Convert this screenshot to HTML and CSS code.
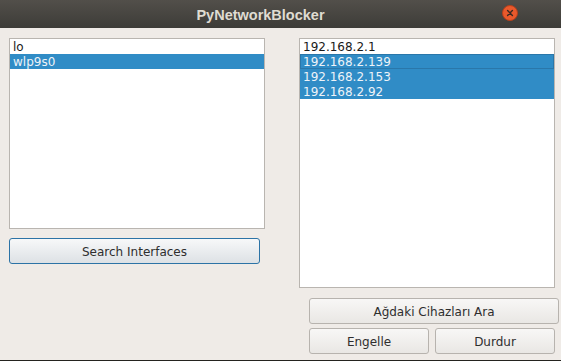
FILE: index.html
```html
<!DOCTYPE html>
<html lang="en">
  <head>
    <meta charset="UTF-8" />
    <title>PyNetworkBlocker</title>
    <link rel="stylesheet" href="styles.css">
  </head>
  <body>
    <div class="window">
      <div class="titlebar">
        <span class="title">PyNetworkBlocker</span>
        <span class="close">
          <svg width="16" height="16" viewBox="0 0 16 16">
            <circle cx="8" cy="8" r="7.5" fill="#e9592c" stroke="#b8401b" stroke-width="1" />
            <path d="M5.6 5.6 L10.4 10.4 M10.4 5.6 L5.6 10.4" stroke="#3a2a22" stroke-width="1.4" stroke-linecap="round" />
          </svg>
        </span>
      </div>

      <div class="content">
        <div class="col left">
          <ul class="list list-ifaces">
            <li>lo</li>
            <li class="selected">wlp9s0</li>
          </ul>
          <button class="btn default">Search Interfaces</button>
        </div>

        <div class="col right">
          <ul class="list list-hosts">
            <li>192.168.2.1</li>
            <li class="selected current">192.168.2.139</li>
            <li class="selected">192.168.2.153</li>
            <li class="selected">192.168.2.92</li>
          </ul>
          <div class="actions">
            <button class="btn wide">Ağdaki Cihazları Ara</button>
            <div class="btn-row">
              <button class="btn">Engelle</button>
              <button class="btn">Durdur</button>
            </div>
          </div>
        </div>
      </div>
      <div class="bottom-edge"></div>
    </div>
  </body>
</html>
```

FILE: styles.css
```css
body {
  margin: 0;
  padding: 0;
  background: #efebe7;
  font-family: "DejaVu Sans", sans-serif;
  font-size: 12px;
  overflow: hidden;
}

.window {
  width: 561px;
  height: 361px;
  display: flex;
  flex-direction: column;
  background: #efebe7;
}

/* Ambiance-style title bar */
.titlebar {
  height: 28px;
  flex: none;
  position: relative;
  display: flex;
  align-items: center;
  justify-content: center;
  background: linear-gradient(to bottom, #524f4a, #3d3c38);
}

.title {
  font-family: "Liberation Sans", sans-serif;
  font-weight: bold;
  font-size: 14.5px;
  color: #dfdbd2;
  margin-right: 40px;
  margin-top: 1px;
}

.close {
  position: absolute;
  right: 43px;
  top: 5px;
  width: 16px;
  height: 16px;
}

.close svg {
  display: block;
}

.content {
  flex: 1;
  display: flex;
  padding: 10px 0 0 9px;
  gap: 34px;
}

.col {
  display: flex;
  flex-direction: column;
}

.left {
  width: 256px;
}

.right {
  width: 260px;
}

.list {
  list-style: none;
  margin: 0;
  padding: 0;
  background: #fff;
  border: 1px solid #b9b5b0;
  color: #1a1a1a;
  box-sizing: border-box;
}

.list li {
  height: 15px;
  line-height: 16px;
  padding-left: 3px;
  box-sizing: border-box;
}

.list li.selected {
  background: #308cc6;
  color: #eef3f8;
}

.list li.current {
  border: 1px solid #2a77aa;
  line-height: 14px;
  padding-left: 2px;
}

.list-ifaces {
  width: 256px;
  height: 191px;
}

.list-hosts {
  width: 256px;
  height: 250px;
}

.btn {
  height: 26px;
  padding: 1px 0 0;
  font-family: "DejaVu Sans", sans-serif;
  font-size: 12px;
  color: #2e2e2e;
  background: linear-gradient(to bottom, #f8f7f6, #e9e7e4);
  border: 1px solid #b7b3ae;
  border-radius: 3px;
  box-sizing: border-box;
}

.btn.default {
  margin-top: 9px;
  width: 251px;
  border-color: #2c73a6;
  background: linear-gradient(to bottom, #f7f8f9, #dde1e5);
}

.actions {
  margin-top: 10px;
  margin-left: 10px;
  display: flex;
  flex-direction: column;
  gap: 4px;
}

.btn.wide {
  width: 250px;
}

.btn-row {
  display: flex;
  gap: 6px;
}

.btn-row .btn {
  width: 120px;
}

.bottom-edge {
  height: 1px;
  flex: none;
  background: #24231f;
}
```
